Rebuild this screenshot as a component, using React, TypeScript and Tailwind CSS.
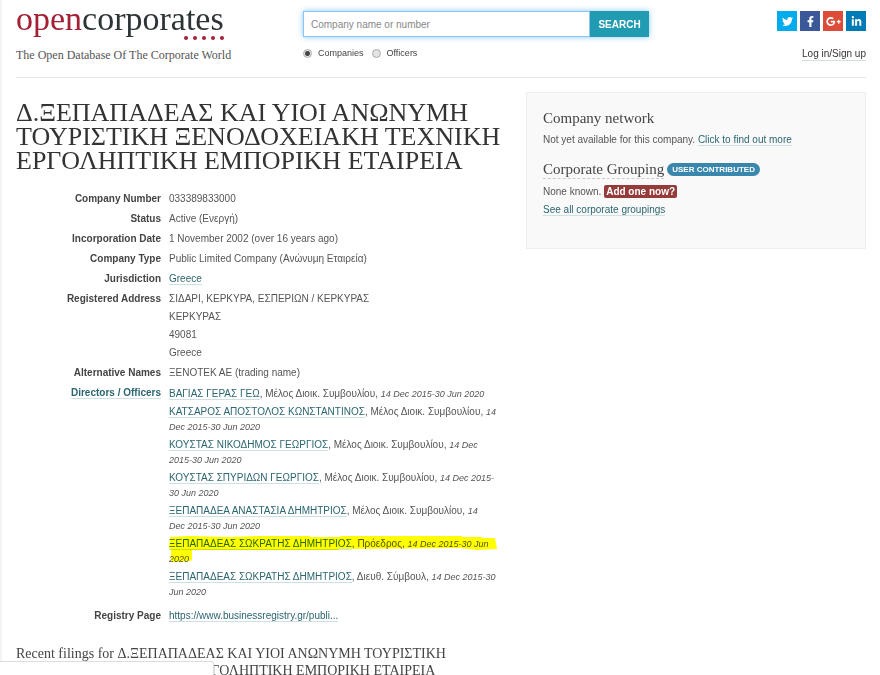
import { Fragment, type ReactNode } from "react";
import { FaFacebookF, FaGooglePlusG, FaLinkedinIn, FaTwitter } from "react-icons/fa";

interface Officer {
  name: string;
  role: string;
  // term of office, one entry per line
  dates: string[];
  highlighted?: boolean;
}

const officers: Officer[] = [
  { name: "ΒΑΓΙΑΣ ΓΕΡΑΣ ΓΕΩ", role: "Μέλος Διοικ. Συμβουλίου", dates: ["14 Dec 2015-30 Jun 2020"] },
  { name: "ΚΑΤΣΑΡΟΣ ΑΠΟΣΤΟΛΟΣ ΚΩΝΣΤΑΝΤΙΝΟΣ", role: "Μέλος Διοικ. Συμβουλίου", dates: ["14", "Dec 2015-30 Jun 2020"] },
  { name: "ΚΟΥΣΤΑΣ ΝΙΚΟΔΗΜΟΣ ΓΕΩΡΓΙΟΣ", role: "Μέλος Διοικ. Συμβουλίου", dates: ["14 Dec", "2015-30 Jun 2020"] },
  { name: "ΚΟΥΣΤΑΣ ΣΠΥΡΙΔΩΝ ΓΕΩΡΓΙΟΣ", role: "Μέλος Διοικ. Συμβουλίου", dates: ["14 Dec 2015-", "30 Jun 2020"] },
  { name: "ΞΕΠΑΠΑΔΕΑ ΑΝΑΣΤΑΣΙΑ ΔΗΜΗΤΡΙΟΣ", role: "Μέλος Διοικ. Συμβουλίου", dates: ["14", "Dec 2015-30 Jun 2020"] },
  { name: "ΞΕΠΑΠΑΔΕΑΣ ΣΩΚΡΑΤΗΣ ΔΗΜΗΤΡΙΟΣ", role: "Πρόεδρος", dates: ["14 Dec 2015-30 Jun", "2020"], highlighted: true },
  { name: "ΞΕΠΑΠΑΔΕΑΣ ΣΩΚΡΑΤΗΣ ΔΗΜΗΤΡΙΟΣ", role: "Διευθ. Σύμβουλ", dates: ["14 Dec 2015-30", "Jun 2020"] },
];

const socials = [
  { label: "Twitter", icon: FaTwitter, color: "bg-[#00aced]" },
  { label: "Facebook", icon: FaFacebookF, color: "bg-[#3b5998]" },
  { label: "Google Plus", icon: FaGooglePlusG, color: "bg-[#dd4b39]" },
  { label: "LinkedIn", icon: FaLinkedinIn, color: "bg-[#007bb6]" },
];

function Link({ children }: { children: ReactNode }) {
  return (
    <a href="#" className="border-b border-[#cfe0e2] text-[#2b6570]">
      {children}
    </a>
  );
}

function Row({ label, children }: { label: ReactNode; children: ReactNode }) {
  return (
    <>
      <dt className="text-right font-bold text-[#444]">{label}</dt>
      <dd>{children}</dd>
    </>
  );
}

function Header() {
  return (
    <header className="flex h-[78px] items-start border-b border-[#e5e5e5] pt-[11px]">
      <div className="w-[287px] shrink-0 font-['Liberation_Serif',serif]">
        <a href="#" className="relative block w-fit text-[34px] leading-4 text-[#2d3436]">
          <span className="text-[#a32035]">open</span>corporates
          <svg viewBox="0 0 40 4" className="absolute right-0 -bottom-[13px] h-1 w-10 fill-[#a32035]" aria-hidden="true">
            <circle cx="2" cy="2" r="2" />
            <circle cx="11" cy="2" r="2" />
            <circle cx="20" cy="2" r="2" />
            <circle cx="29" cy="2" r="2" />
            <circle cx="38" cy="2" r="2" />
          </svg>
        </a>
        <p className="mt-5 text-[12px] leading-4 text-[#555]">The Open Database Of The Corporate World</p>
      </div>

      <form className="w-[346px]" onSubmit={(e) => e.preventDefault()}>
        <div className="flex h-[26px] shadow-[0_0_6px_#8cc8f5]">
          <input
            type="text"
            autoFocus
            aria-label="Company name or number"
            placeholder="Company name or number"
            className="min-w-0 flex-1 border border-[#8cc3f0] bg-white px-[7px] text-[10px] outline-none placeholder:text-[#888]"
          />
          <button type="submit" className="w-[59px] bg-[#219bb1] text-[10px] font-bold text-white">
            SEARCH
          </button>
        </div>
        <div className="mt-2 flex items-center gap-2 text-[9px] leading-4 text-[#444]">
          <label className="flex items-center gap-[6px]">
            <input
              type="radio"
              name="kind"
              defaultChecked
              className="size-[9px] appearance-none rounded-full border border-[#aaa] bg-[radial-gradient(circle,#444_0_2px,#e8e8e8_3px)]"
            />
            Companies
          </label>
          <label className="flex items-center gap-[6px]">
            <input type="radio" name="kind" className="size-[9px] appearance-none rounded-full border border-[#aaa] bg-[#e4e4e4]" />
            Officers
          </label>
        </div>
      </form>

      <div className="ml-auto flex flex-col items-end">
        <div className="flex gap-[3px]">
          {socials.map(({ label, icon: Icon, color }) => (
            <a key={label} href="#" aria-label={label} className={`flex size-5 items-center justify-center text-white ${color}`}>
              <Icon size={label === "Google Plus" ? 15 : 11} />
            </a>
          ))}
        </div>
        <a href="#" className="mt-[17px] border-b border-[#cfe0e2] text-[10px] leading-3 text-[#333]">
          Log in/Sign up
        </a>
      </div>
    </header>
  );
}

// Marker stroke over the officer's two text lines
function Marker() {
  return (
    <svg viewBox="0 0 328 26" className="pointer-events-none absolute top-0 left-0 h-[26px] w-[328px] mix-blend-multiply" aria-hidden="true">
      <path
        d="M1 1 L20 0 L60 1 L88 0 L140 0 L142 1 L170 1 L172 0 L292 0 L294 1 L312 1 L314 2 L326 2 L328 13 L308 14 L290 12 L170 13 L168 14 L23 14 L23 24 L21 25 L4 26 L2 24 L2 14 L0 12 Z"
        fill="#ffff00"
      />
    </svg>
  );
}

function OfficerItem({ officer }: { officer: Officer }) {
  return (
    <li className="relative">
      <Link>{officer.name}</Link>, {officer.role},{" "}
      <em className="text-[9px] leading-none">
        {officer.dates.map((line, i) => (
          <Fragment key={line}>
            {i > 0 && <br />}
            {line}
          </Fragment>
        ))}
      </em>
      {officer.highlighted && <Marker />}
    </li>
  );
}

export default function App() {
  return (
    <div className="min-h-screen border-l-2 border-[#f4f4f4] bg-white pr-[14px] pl-[14px] font-['Liberation_Sans',Arial,sans-serif] text-[10px] text-[#555]">
      <Header />
      <div className="flex items-start justify-between">
        <main className="w-[58%] pt-[23px]">
          <h1 className="font-['Liberation_Serif',serif] text-[26px] leading-6 whitespace-nowrap text-[#333]">
            Δ.ΞΕΠΑΠΑΔΕΑΣ ΚΑΙ ΥΙΟΙ ΑΝΩΝΥΜΗ
            <br />
            ΤΟΥΡΙΣΤΙΚΗ ΞΕΝΟΔΟΧΕΙΑΚΗ ΤΕΧΝΙΚΗ
            <br />
            ΕΡΓΟΛΗΠΤΙΚΗ ΕΜΠΟΡΙΚΗ ΕΤΑΙΡΕΙΑ
          </h1>

          <dl className="mt-[17px] grid grid-cols-[145px_1fr] gap-x-2 gap-y-[2px] leading-[18px]">
            <Row label="Company Number">033389833000</Row>
            <Row label="Status">Active (Ενεργή)</Row>
            <Row label="Incorporation Date">1 November 2002 (over 16 years ago)</Row>
            <Row label="Company Type">Public Limited Company (Ανώνυμη Εταιρεία)</Row>
            <Row label="Jurisdiction">
              <Link>Greece</Link>
            </Row>
            <Row label="Registered Address">
              ΣΙΔΑΡΙ, ΚΕΡΚΥΡΑ, ΕΣΠΕΡΙΩΝ / ΚΕΡΚΥΡΑΣ
              <br />
              ΚΕΡΚΥΡΑΣ
              <br />
              49081
              <br />
              Greece
            </Row>
            <Row label="Alternative Names">ΞΕΝΟΤΕΚ ΑΕ (trading name)</Row>
            <Row label={<Link>Directors / Officers</Link>}>
              <ul className="flex flex-col gap-[3px] pt-[2px] pb-[6px] leading-[15px]">
                {officers.map((officer, i) => (
                  <OfficerItem key={i} officer={officer} />
                ))}
              </ul>
            </Row>
            <Row label="Registry Page">
              <Link>https://www.businessregistry.gr/publi...</Link>
            </Row>
          </dl>

          <h2 className="mt-5 font-['Liberation_Serif',serif] text-[14px] leading-[17px] whitespace-nowrap text-[#444]">
            Recent filings for Δ.ΞΕΠΑΠΑΔΕΑΣ ΚΑΙ ΥΙΟΙ ΑΝΩΝΥΜΗ ΤΟΥΡΙΣΤΙΚΗ
            <br />
            ΞΕΝΟΔΟΧΕΙΑΚΗ ΤΕΧΝΙΚΗ ΕΡΓΟΛΗΠΤΙΚΗ ΕΜΠΟΡΙΚΗ ΕΤΑΙΡΕΙΑ
          </h2>
        </main>

        <aside className="mt-[14px] w-[40%] border border-[#eee] bg-[#f9f9f9] px-4 pt-4 pb-[29px]">
          <h3 className="font-['Liberation_Serif',serif] text-[15px] leading-[18px] text-[#444]">Company network</h3>
          <p className="mt-1 leading-[18px]">
            Not yet available for this company. <Link>Click to find out more</Link>
          </p>
          <div className="mt-[11px] flex items-center gap-[3px]">
            <h3 className="border-b border-dashed border-[#ccc] font-['Liberation_Serif',serif] text-[15px] leading-[18px] text-[#444]">
              Corporate Grouping
            </h3>
            <span className="rounded-full bg-[#3a87ad] px-[5px] text-[8px] leading-[13px] font-bold text-white">USER CONTRIBUTED</span>
          </div>
          <p className="mt-1 leading-[18px]">
            None known.{" "}
            <a href="#" className="inline-block rounded-[2px] bg-[#953b39] px-[2px] leading-[13px] font-bold text-white">
              Add one now?
            </a>
          </p>
          <p className="leading-[18px]">
            <Link>See all corporate groupings</Link>
          </p>
        </aside>
      </div>

      {/* Browser status bubble */}
      <div className="fixed bottom-0 left-0 h-[14px] w-[214px] rounded-tr-[3px] border-t border-r border-[#ddd] bg-white" />
    </div>
  );
}
